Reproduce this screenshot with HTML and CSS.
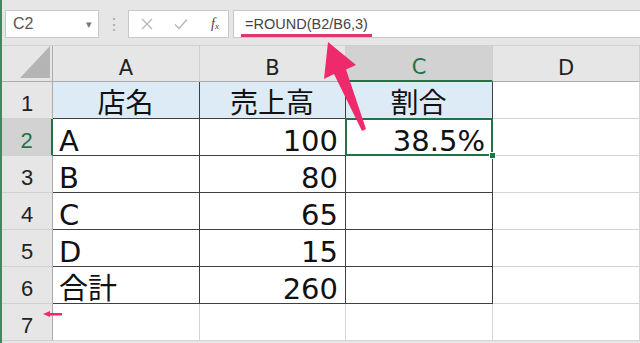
FILE: index.html
```html
<!DOCTYPE html>
<html>
<head>
<meta charset="utf-8"/>
<title>ROUND</title>
<link rel="stylesheet" href="styles.css">
</head>
<body>
<div class="app">
  <div class="fbar">
    <div class="namebox"><span>C2</span><span class="dd">&#9662;</span></div>
    <div class="grip">&#8942;</div>
    <div class="fbtns">
      <svg class="ico" width="12" height="12" viewBox="0 0 12 12"><path d="M1 1L11 11M11 1L1 11" stroke="#b8b8b8" stroke-width="1.3" fill="none"/></svg>
      <svg class="ico" width="14" height="12" viewBox="0 0 14 12"><path d="M1 6.5L5 10.5L13 1.5" stroke="#b8b8b8" stroke-width="1.5" fill="none"/></svg>
      <span class="fx">f<sub>x</sub></span>
    </div>
    <div class="formula"><span class="hl">=ROUND(B2/B6,3)</span></div>
  </div>

  <div class="sheet">
    <div class="corner"><svg width="30" height="32" viewBox="0 0 30 32"><polygon points="30,0 30,32 0,32" fill="#b4b4b4"/></svg></div>
    <div class="ch">A</div>
    <div class="ch">B</div>
    <div class="ch sel">C</div>
    <div class="ch">D</div>

    <div class="rh">1</div>
    <div class="c t head mid">店名</div>
    <div class="c t head mid">売上高</div>
    <div class="c t head mid">割合</div>
    <div class="c"></div>

    <div class="rh sel">2</div>
    <div class="c t">A</div>
    <div class="c t num">100</div>
    <div class="c t num cur">38.5%</div>
    <div class="c"></div>

    <div class="rh">3</div>
    <div class="c t">B</div>
    <div class="c t num">80</div>
    <div class="c t"></div>
    <div class="c"></div>

    <div class="rh">4</div>
    <div class="c t">C</div>
    <div class="c t num">65</div>
    <div class="c t"></div>
    <div class="c"></div>

    <div class="rh">5</div>
    <div class="c t">D</div>
    <div class="c t num">15</div>
    <div class="c t"></div>
    <div class="c"></div>

    <div class="rh">6</div>
    <div class="c t">合計</div>
    <div class="c t num">260</div>
    <div class="c t"></div>
    <div class="c"></div>

    <div class="rh">7</div>
    <div class="c"></div>
    <div class="c"></div>
    <div class="c"></div>
    <div class="c"></div>
  </div>

  <!-- pink annotation marks drawn over the sheet -->
  <svg class="marks" width="640" height="343" viewBox="0 0 640 343">
    <polygon fill="#ee2a6c" points="328,42 356,65 346,69.5 366,129 362,131 334,74 324,79"/>
    <polygon fill="#ee2a6c" points="43,314 50,311 50,313 62,313 62,315.5 50,315.5 50,317"/>
  </svg>
</div>
</body>
</html>
```

FILE: styles.css
```css
body {
  margin: 0;
  background: #e6e6e6;
  font-family: "Liberation Sans", "Noto Sans CJK JP", sans-serif;
}

.app {
  position: relative;
  width: 640px;
  height: 343px;
  overflow: hidden;
  box-sizing: border-box;
  border-left: 2px solid #3d8a5f;
  background: #e6e6e6;
}

/* formula bar */
.fbar {
  height: 46px;
  box-sizing: border-box;
  padding-top: 10px;
  display: flex;
  align-items: flex-start;
  border-bottom: 1px solid #d0d0d0;
}

.namebox {
  margin-left: 3px;
  width: 94px;
  height: 28px;
  box-sizing: border-box;
  background: #fff;
  border: 1px solid #c8c8c8;
  display: flex;
  align-items: center;
  justify-content: space-between;
  padding: 0 6px 0 7px;
  font-size: 16px;
  color: #555;
}

.namebox .dd {
  font-size: 11px;
  color: #777;
}

.grip {
  width: 29px;
  height: 28px;
  display: flex;
  align-items: center;
  justify-content: center;
  color: #a8a8a8;
  font-size: 16px;
}

.fbtns {
  width: 101px;
  height: 28px;
  box-sizing: border-box;
  background: #fff;
  border: 1px solid #c8c8c8;
  display: flex;
  align-items: center;
  padding: 0 8px 0 12px;
  gap: 21px;
}

.fx {
  font-family: "Liberation Serif", serif;
  font-style: italic;
  font-size: 14px;
  color: #444;
  margin-left: 2px;
}

.fx sub {
  font-size: 9px;
  vertical-align: -1px;
}

.formula {
  margin-left: 4px;
  flex: 1;
  height: 28px;
  box-sizing: border-box;
  background: #fff;
  border: 1px solid #c8c8c8;
  border-right: none;
  display: flex;
}

.hl {
  margin-left: 7px;
  padding: 2px 4px 0;
  display: flex;
  align-items: center;
  border-bottom: 3px solid #e5336b;
  font-size: 14.5px;
  color: #444;
}

/* sheet grid */
.sheet {
  display: grid;
  grid-template-columns: 51px 147px 146px 147px 147px;
  grid-template-rows: 36px repeat(7, 37px);
  background: #fff;
}

.corner {
  background: #e6e6e6;
  border-right: 1px solid #ababab;
  border-bottom: 1px solid #ababab;
  display: flex;
  align-items: flex-end;
  justify-content: flex-end;
  padding: 0 2px 3px 0;
}

.sheet > div {
  box-sizing: border-box;
}

.ch {
  background: #e6e6e6;
  border-right: 1px solid #d0d0d0;
  border-bottom: 1px solid #ababab;
  display: flex;
  align-items: flex-end;
  justify-content: center;
  font-family: "DejaVu Sans", sans-serif;
  font-size: 21px;
  line-height: 23px;
  padding-bottom: 1px;
  color: #222;
}

.rh {
  background: #e6e6e6;
  border-right: 1px solid #ababab;
  border-bottom: 1px solid #d0d0d0;
  display: flex;
  align-items: flex-end;
  justify-content: center;
  font-size: 22px;
  line-height: 22px;
  padding-bottom: 3px;
  color: #222;
}

.ch.sel {
  background: #d2d2d2;
  color: #217346;
  border-bottom: 2px solid #217346;
}

.rh.sel {
  background: #d2d2d2;
  color: #217346;
  border-right: 2px solid #217346;
}

.c {
  border-right: 1px solid #d4d4d4;
  border-bottom: 1px solid #d4d4d4;
  display: flex;
  align-items: flex-end;
  padding: 0 7px 0 6px;
  font-family: "DejaVu Sans", "Noto Sans CJK JP", sans-serif;
  font-size: 29px;
  line-height: 28px;
  color: #111;
  white-space: nowrap;
}

.c.t {
  border-right-color: #404040;
  border-bottom-color: #404040;
}

.c.head {
  background: #ddebf7;
  font-size: 28px;
}

.c.mid {
  justify-content: center;
}

.c.num {
  justify-content: flex-end;
}

.c.cur {
  position: relative;
}

.c.cur::after {
  content: "";
  position: absolute;
  left: -1px;
  top: -1px;
  right: -1px;
  bottom: -1px;
  border: 2px solid #217346;
}

.c.cur::before {
  content: "";
  position: absolute;
  right: -4px;
  bottom: -4px;
  width: 5px;
  height: 5px;
  background: #217346;
  border: 1px solid #fff;
  z-index: 1;
}

.marks {
  position: absolute;
  left: -2px;
  top: 0;
  pointer-events: none;
}
```
